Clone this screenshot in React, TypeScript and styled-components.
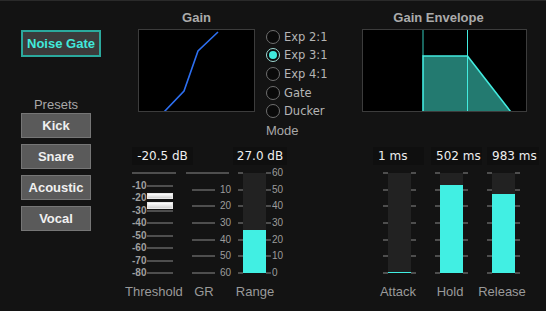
import React from 'react'
import styled, { createGlobalStyle } from 'styled-components'

const GlobalStyle = createGlobalStyle`
  body {
    margin: 0;
    background: #131313;
  }
`

const CYAN = '#41efe3'

const modes = ['Exp 2:1', 'Exp 3:1', 'Exp 4:1', 'Gate', 'Ducker']
const presets = ['Kick', 'Snare', 'Acoustic', 'Vocal']
const thresholdTicks = ['-10', '-20', '-30', '-40', '-50', '-60', '-70', '-80']
const grTicks = ['10', '20', '30', '40', '50', '60']
const rangeTicks = ['60', '50', '40', '30', '20', '10', '0']

interface IMeterProps {
  value: number
  labels?: string[]
}

const Meter: React.FC<IMeterProps> = ({ value, labels }): JSX.Element => {
  const ticks = Array.from({ length: 7 })
  return (
    <MeterWrap>
      <TickColumn>
        {ticks.map((_, i) => (
          <TickRow key={i}>
            <TickLine $w={5} />
          </TickRow>
        ))}
      </TickColumn>
      <Bar>
        <Fill style={{ height: `${value}%` }} />
      </Bar>
      <TickColumn>
        {ticks.map((_, i) => (
          <TickRow key={i}>
            <TickLine $w={5} />
          </TickRow>
        ))}
      </TickColumn>
      {labels && (
        <TickColumn>
          {labels.map((l) => (
            <TickRow key={l}>
              <TickLabel $w={14} $ml={1}>
                {l}
              </TickLabel>
            </TickRow>
          ))}
        </TickColumn>
      )}
    </MeterWrap>
  )
}

export default function App(): JSX.Element {
  return (
    <>
      <GlobalStyle />
      <Frame>
        <LeftColumn>
          <NoiseGateButton>Noise Gate</NoiseGateButton>
          <Presets>
            <PresetsLabel>Presets</PresetsLabel>
            {presets.map((p) => (
              <PresetButton key={p}>{p}</PresetButton>
            ))}
          </Presets>
        </LeftColumn>

        <MiddleTop>
          <GraphBlock $w={117} $ml={13}>
            <SectionTitle>Gain</SectionTitle>
            <GraphBox $w={117}>
              <svg width="115" height="81" viewBox="0 0 115 81">
                <polyline
                  points="25,82 45,61 59,21 79,2"
                  fill="none"
                  stroke="#2d6ff0"
                  strokeWidth="1.6"
                />
              </svg>
            </GraphBox>
          </GraphBlock>
          <RadioGroup>
            {modes.map((m) => (
              <RadioRow key={m}>
                <RadioCircle $checked={m === 'Exp 3:1'} />
                <RadioText>{m}</RadioText>
              </RadioRow>
            ))}
            <ModeLabel>Mode</ModeLabel>
          </RadioGroup>
        </MiddleTop>

        <RightTop>
          <GraphBlock $w={165} $ml={2}>
            <SectionTitle $pr={12}>Gain Envelope</SectionTitle>
            <GraphBox $w={165}>
              <svg width="163" height="81" viewBox="0 0 163 81">
                <line x1="60" y1="0" x2="60" y2="26" stroke="#2ba99d" strokeWidth="1.2" />
                <polygon points="60,82 60,26 104.5,26 147,82" fill="#237a70" />
                <polyline
                  points="60,82 60,26 104.5,26 147.5,81.5"
                  fill="none"
                  stroke="#43ece0"
                  strokeWidth="1.6"
                />
                <line x1="104.5" y1="0" x2="104.5" y2="81" stroke="#43ece0" strokeWidth="1" />
              </svg>
            </GraphBox>
          </GraphBlock>
        </RightTop>

        <MiddleBottom>
          <ValueRow>
            <ValueBox $w={61} $ml={7}>-20.5 dB</ValueBox>
            <ValueBox $w={54} $ml={40}>27.0 dB</ValueBox>
          </ValueRow>

          <ScaleRow>
            <Scale $w={44} $ml={7}>
              <TickRow>
                <TickLine $w={44} />
              </TickRow>
              {thresholdTicks.map((t) => (
                <TickRow key={t}>
                  <TickLabel $w={14} $align="right" $strong>
                    {t}
                  </TickLabel>
                  <TickLine $w={26} $ml={1} />
                </TickRow>
              ))}
              <Handle style={{ top: `${(20.5 / 80) * 100}px` }}>
                <HandleBar />
                <HandleBar />
              </Handle>
            </Scale>

            <Scale $w={46} $ml={10}>
              <TickRow>
                <TickLine $w={43} />
              </TickRow>
              {grTicks.map((t) => (
                <TickRow key={t}>
                  <TickLine $w={23} $ml={6} />
                  <TickLabel $w={14} $ml={5}>
                    {t}
                  </TickLabel>
                </TickRow>
              ))}
            </Scale>

            <MeterSlot $ml={6}>
              <Meter value={43} labels={rangeTicks} />
            </MeterSlot>
          </ScaleRow>

          <LabelRow>
            <StripLabel $w={56}>Threshold</StripLabel>
            <StripLabel $w={40} $ml={3}>
              GR
            </StripLabel>
            <StripLabel $w={52} $ml={5}>
              Range
            </StripLabel>
          </LabelRow>
        </MiddleBottom>

        <RightBottom>
          <ValueRow>
            <ValueBox $w={51} $ml={13} $left>
              1 ms
            </ValueBox>
            <ValueBox $w={51} $ml={7} $left>
              502 ms
            </ValueBox>
            <ValueBox $w={52} $ml={5} $left>
              983 ms
            </ValueBox>
          </ValueRow>

          <ScaleRow>
            <MeterSlot $ml={23}>
              <Meter value={1} />
            </MeterSlot>
            <MeterSlot $ml={19}>
              <Meter value={88} />
            </MeterSlot>
            <MeterSlot $ml={19}>
              <Meter value={79} />
            </MeterSlot>
          </ScaleRow>

          <LabelRow>
            <StripLabel $w={52} $ml={12}>
              Attack
            </StripLabel>
            <StripLabel $w={52}>Hold</StripLabel>
            <StripLabel $w={52}>Release</StripLabel>
          </LabelRow>
        </RightBottom>
      </Frame>
    </>
  )
}

const Frame = styled.div`
  width: 546px;
  height: 311px;
  box-sizing: border-box;
  border-top: 1px solid #2a2a2a;
  background: #131313;
  display: grid;
  grid-template-columns: 125px 235px 186px;
  grid-template-rows: 139px 1fr;
  font-family: 'Liberation Sans', Arial, sans-serif;
  overflow: hidden;
`

const LeftColumn = styled.div`
  grid-row: 1 / 3;
  display: flex;
  flex-direction: column;
  align-items: flex-start;
  padding: 29px 0 0 21px;
`

const NoiseGateButton = styled.div`
  width: 80px;
  height: 27px;
  box-sizing: border-box;
  border: 2px solid #2ba99d;
  background: #3b3b3b;
  color: #41e9dc;
  font-weight: 700;
  font-size: 13px;
  display: flex;
  align-items: center;
  justify-content: center;
`

const Presets = styled.div`
  margin-top: 40px;
  width: 70px;
  display: flex;
  flex-direction: column;
  gap: 6px;
`

const PresetsLabel = styled.div`
  text-align: center;
  font-size: 13px;
  line-height: 15px;
  color: #a8a8a8;
  margin-bottom: -5px;
`

const PresetButton = styled.div`
  height: 25px;
  box-sizing: border-box;
  border: 1px solid #767676;
  background: #5a5a5a;
  color: #f0f0f0;
  font-weight: 700;
  font-size: 13px;
  display: flex;
  align-items: center;
  justify-content: center;
`

const MiddleTop = styled.div`
  display: flex;
  align-items: flex-start;
`

const RightTop = styled.div`
  display: flex;
  align-items: flex-start;
`

const GraphBlock = styled.div<{ $w: number; $ml: number }>`
  width: ${(p) => p.$w}px;
  margin-left: ${(p) => p.$ml}px;
  display: flex;
  flex-direction: column;
`

const SectionTitle = styled.div<{ $pr?: number }>`
  height: 28px;
  box-sizing: border-box;
  padding-top: 4px;
  padding-right: ${(p) => p.$pr ?? 0}px;
  line-height: 25px;
  text-align: center;
  font-weight: 700;
  font-size: 13px;
  color: #ababab;
`

const GraphBox = styled.div<{ $w: number }>`
  width: ${(p) => p.$w}px;
  height: 83px;
  box-sizing: border-box;
  border: 1px solid #3c3c3c;
  background: #000;
  overflow: hidden;

  svg {
    display: block;
  }
`

const RadioGroup = styled.div`
  margin-left: 11px;
  padding-top: 26.5px;
  display: flex;
  flex-direction: column;
`

const RadioRow = styled.div`
  height: 18.6px;
  display: flex;
  align-items: center;
  gap: 4px;
`

const RadioCircle = styled.div<{ $checked?: boolean }>`
  width: 14px;
  height: 14px;
  box-sizing: border-box;
  border-radius: 50%;
  border: 1.5px solid ${(p) => (p.$checked ? '#9fd9d4' : '#6f6f6f')};
  background: #0a0a0a;
  display: flex;
  align-items: center;
  justify-content: center;

  &::after {
    content: '';
    display: ${(p) => (p.$checked ? 'block' : 'none')};
    width: 8px;
    height: 8px;
    border-radius: 50%;
    background: #40e8dc;
  }
`

const RadioText = styled.div`
  font-family: 'DejaVu Sans', sans-serif;
  font-size: 11.5px;
  color: #b5b5b5;
`

const ModeLabel = styled.div`
  margin-top: 3px;
  font-size: 13px;
  line-height: 15px;
  color: #a8a8a8;
`

const MiddleBottom = styled.div`
  display: flex;
  flex-direction: column;
`

const RightBottom = styled.div`
  display: flex;
  flex-direction: column;
`

const ValueRow = styled.div`
  display: flex;
  margin-top: 7px;
  height: 18px;
`

const ValueBox = styled.div<{ $w: number; $ml: number; $left?: boolean }>`
  width: ${(p) => p.$w}px;
  margin-left: ${(p) => p.$ml}px;
  box-sizing: border-box;
  padding-left: ${(p) => (p.$left ? 5 : 0)}px;
  background: #0f0f0f;
  font-family: 'DejaVu Sans', sans-serif;
  font-size: 12px;
  line-height: 18px;
  color: #eeeeee;
  text-align: ${(p) => (p.$left ? 'left' : 'center')};
  white-space: nowrap;
`

const ScaleRow = styled.div`
  display: flex;
  margin-top: 2px;
  height: 112px;
`

const Scale = styled.div<{ $w: number; $ml: number }>`
  position: relative;
  width: ${(p) => p.$w}px;
  margin-left: ${(p) => p.$ml}px;
  height: 112px;
  display: flex;
  flex-direction: column;
  justify-content: space-between;
`

const TickRow = styled.div`
  height: 12px;
  display: flex;
  align-items: center;
`

const TickLine = styled.div<{ $w: number; $ml?: number }>`
  width: ${(p) => p.$w}px;
  margin-left: ${(p) => p.$ml ?? 0}px;
  height: 2px;
  background: #4e4e4e;
  flex-shrink: 0;
`

const TickLabel = styled.div<{ $w: number; $ml?: number; $align?: string; $strong?: boolean }>`
  width: ${(p) => p.$w}px;
  margin-left: ${(p) => p.$ml ?? 0}px;
  text-align: ${(p) => p.$align ?? 'left'};
  font-size: 10px;
  font-weight: ${(p) => (p.$strong ? 700 : 400)};
  line-height: 12px;
  color: ${(p) => (p.$strong ? '#a0a0a0' : '#9c9c9c')};
  flex-shrink: 0;
  white-space: nowrap;
`

const Handle = styled.div`
  position: absolute;
  left: 15px;
  width: 26px;
  display: flex;
  flex-direction: column;
  gap: 3px;
`

const HandleBar = styled.div`
  height: 4.5px;
  background: linear-gradient(#ffffff, #cfcfcf);
  border: 0.5px solid #e8e8e8;
`

const MeterSlot = styled.div<{ $ml: number }>`
  margin-left: ${(p) => p.$ml}px;
`

const MeterWrap = styled.div`
  display: flex;
  height: 112px;
`

const TickColumn = styled.div`
  display: flex;
  flex-direction: column;
  justify-content: space-between;
  height: 112px;
`

const Bar = styled.div`
  margin-top: 6px;
  width: 23px;
  height: 100px;
  background: #222222;
  display: flex;
  flex-direction: column;
  justify-content: flex-end;
`

const Fill = styled.div`
  background: ${CYAN};
  min-height: 1px;
`

const LabelRow = styled.div`
  display: flex;
  margin-top: 5px;
`

const StripLabel = styled.div<{ $w: number; $ml?: number }>`
  width: ${(p) => p.$w}px;
  margin-left: ${(p) => p.$ml ?? 0}px;
  text-align: center;
  font-size: 13px;
  line-height: 15px;
  color: #9a9a9a;
  white-space: nowrap;
`
